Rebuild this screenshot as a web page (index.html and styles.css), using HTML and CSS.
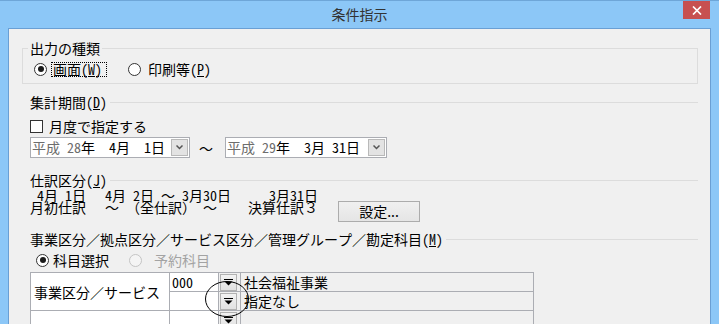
FILE: index.html
```html
<!DOCTYPE html>
<html lang="ja">
<head>
  <meta charset="UTF-8">
  <title>条件指示</title>
  <link rel="stylesheet" href="styles.css">
</head>
<body>
  <div class="window">
    <div class="titlebar">
      <span></span>
      <div class="title">条件指示</div>
      <div class="close">
        <svg width="10" height="9" viewBox="0 0 10 9"><path d="M1 0.5 L9 8.5 M9 0.5 L1 8.5" stroke="#fff" stroke-width="1.7"/></svg>
      </div>
    </div>

    <div class="client">
      <fieldset class="group">
        <legend>出力の種類</legend>
        <div class="radio-row">
          <label class="radio"><span class="dot on"></span><span class="focus">画面(<u>W</u>)</span></label>
          <label class="radio second"><span class="dot"></span><span>印刷等(<u>P</u>)</span></label>
        </div>
      </fieldset>

      <div class="head"><span>集計期間(<u>D</u>)</span></div>
      <div class="check-row">
        <span class="checkbox"></span><span>月度で指定する</span>
      </div>
      <div class="combo-row">
        <div class="combo">
          <span class="combo-text"><span class="era">平成 28</span>年  4月  1日</span>
          <span class="combo-btn"><svg width="7" height="5" viewBox="0 0 7 5"><path d="M0.5 0.5 L3.5 3.5 L6.5 0.5" fill="none" stroke="#555" stroke-width="1.5"/></svg></span>
        </div>
        <span class="tilde">～</span>
        <div class="combo wide">
          <span class="combo-text"><span class="era">平成 29</span>年  3月 31日</span>
          <span class="combo-btn"><svg width="7" height="5" viewBox="0 0 7 5"><path d="M0.5 0.5 L3.5 3.5 L6.5 0.5" fill="none" stroke="#555" stroke-width="1.5"/></svg></span>
        </div>
      </div>

      <div class="head second-head"><span>仕訳区分(<u>J</u>)</span></div>
      <div class="period">
        <span> 4月 1日</span>
        <span>4月 2日 ～ 3月30日</span>
        <span>   3月31日</span>
        <span></span>
        <span>月初仕訳</span>
        <span>～　（全仕訳） ～</span>
        <span>決算仕訳３</span>
        <button class="btn">設定...</button>
      </div>

      <div class="head third-head"><span>事業区分／拠点区分／サービス区分／管理グループ／勘定科目(<u>M</u>)</span></div>
      <div class="radio-row subject">
        <label class="radio"><span class="dot on"></span><span>科目選択</span></label>
        <label class="radio off"><span class="dot"></span><span>予約科目</span></label>
      </div>

      <div class="table-wrap">
        <table class="grid">
          <tr>
            <td class="name" rowspan="2">事業区分／サービス</td>
            <td class="code">000</td>
            <td class="pick"><span class="pick-btn"><svg width="9" height="7" viewBox="0 0 9 7"><path d="M0 0.5 H9" stroke="#000"/><path d="M0.5 2.5 H8.5 L4.5 6.5 Z" fill="#000"/></svg></span></td>
            <td class="value">社会福祉事業</td>
          </tr>
          <tr>
            <td class="code"></td>
            <td class="pick"><span class="pick-btn"><svg width="9" height="7" viewBox="0 0 9 7"><path d="M0 0.5 H9" stroke="#000"/><path d="M0.5 2.5 H8.5 L4.5 6.5 Z" fill="#000"/></svg></span></td>
            <td class="value">指定なし</td>
          </tr>
          <tr>
            <td class="name"></td>
            <td class="code"></td>
            <td class="pick"><span class="pick-btn"><svg width="9" height="7" viewBox="0 0 9 7"><path d="M0 0.5 H9" stroke="#000"/><path d="M0.5 2.5 H8.5 L4.5 6.5 Z" fill="#000"/></svg></span></td>
            <td class="value"></td>
          </tr>
        </table>
        <svg class="mark" width="46" height="40" viewBox="0 0 46 40"><ellipse cx="23" cy="19" rx="21.5" ry="17.5" fill="none" stroke="#000" stroke-width="1"/></svg>
      </div>
    </div>
  </div>
</body>
</html>
```

FILE: styles.css
```css
body {
  margin: 0;
  padding: 0;
  font-family: "Noto Sans Mono CJK JP", "Noto Sans CJK JP", monospace;
  font-size: 14px;
  color: #000;
  background-color: #8cc7f7;
}

u {
  text-decoration: underline;
  text-underline-offset: 1px;
}

.window {
  display: flex;
  flex-direction: column;
  height: 324px;
  overflow: hidden;
  border-top: 1px solid #6ea6d8;
  box-sizing: border-box;
}

.titlebar {
  display: grid;
  grid-template-columns: 1fr auto 1fr;
  height: 27px;
  flex-shrink: 0;
}

.title {
  font-family: "Noto Sans CJK JP", sans-serif;
  font-size: 14px;
  color: #333;
  line-height: 27px;
}

.close {
  justify-self: end;
  width: 27px;
  height: 18px;
  margin-right: 9px;
  background-color: #c75050;
  display: flex;
  align-items: center;
  justify-content: center;
}

.client {
  flex: 1;
  margin: 0 8px 0 8px;
  border: 1px solid #6a9fd4;
  border-bottom: none;
  background-color: #f0f0f0;
  padding: 0 12px 0 13px;
}

/* 出力の種類 */
.group {
  margin: 11px 0 0 0;
  border: 1px solid #dcdcdc;
  padding: 5px 0 6px 5px;
}

.group legend {
  padding: 0 2px;
  line-height: 16px;
}

.radio-row {
  display: flex;
  align-items: center;
  height: 16px;
  line-height: 13px;
  margin-left: 6px;
}

.radio {
  display: flex;
  align-items: center;
  gap: 4px;
}

.radio.second {
  margin-left: 21px;
  gap: 7px;
}

.dot {
  width: 11px;
  height: 11px;
  border: 1px solid #333;
  border-radius: 50%;
  background-color: #fff;
  display: flex;
  align-items: center;
  justify-content: center;
}

.dot.on::after {
  content: "";
  width: 6px;
  height: 6px;
  border-radius: 50%;
  background-color: #1a1a1a;
}

.focus {
  border: 1px dotted #000;
  padding: 0 4px 0 1px;
}

/* 見出し行 */
.head {
  display: flex;
  align-items: center;
  gap: 3px;
  height: 16px;
  line-height: 16px;
  padding-left: 8px;
  margin-top: 10px;
}

.head::after {
  content: "";
  flex: 1;
  border-top: 1px solid #dcdcdc;
}

.second-head {
  margin-top: 14px;
}

.third-head {
  margin-top: 9px;
}

.check-row {
  display: flex;
  align-items: center;
  gap: 6px;
  height: 16px;
  margin-top: 8px;
  padding-left: 8px;
}

.checkbox {
  width: 11px;
  height: 11px;
  border: 1px solid #333;
  background-color: #fff;
}

.combo-row {
  display: flex;
  align-items: center;
  margin-top: 3px;
  padding-left: 8px;
}

.combo {
  display: flex;
  width: 160px;
  height: 21px;
  box-sizing: border-box;
  border: 1px solid #abadb3;
  background-color: #fff;
}

.combo.wide {
  width: 162px;
}

.combo-text {
  flex: 1;
  white-space: pre;
  line-height: 19px;
  padding-left: 1px;
}

.era {
  color: #6d6d6d;
}

.combo-btn {
  width: 15px;
  margin: 1px;
  border: 1px solid #b9b9b9;
  background-color: #e3e3e3;
  display: flex;
  align-items: center;
  justify-content: center;
}

.tilde {
  margin: 0 12px 0 9px;
}

/* 仕訳区分 */
.period {
  display: grid;
  grid-template-columns: 75px 143px 90px 82px;
  grid-template-rows: 12px auto;
  align-items: start;
  line-height: 12px;
  white-space: pre;
  margin-top: 1px;
  padding-left: 8px;
}

.btn {
  width: 82px;
  height: 21px;
  border: 1px solid #acacac;
  background: linear-gradient(#f0f0f0, #e5e5e5);
  font-family: "Noto Sans CJK JP", sans-serif;
  font-size: 14px;
  line-height: 17px;
  padding: 0;
  color: #000;
}

.subject {
  margin-top: 5px;
  margin-left: 14px;
  height: 16px;
}

.radio.off {
  margin-left: 20px;
  gap: 12px;
  color: #a3a3a3;
}

.radio.off .dot {
  border-color: #c4c4c4;
  background-color: #f4f4f4;
}

/* 科目テーブル */
.table-wrap {
  position: relative;
  margin-top: 4px;
  margin-left: 8px;
}

.grid {
  border-collapse: collapse;
  table-layout: fixed;
  width: 504px;
}

.grid td {
  border: 1px solid #abadb3;
  height: 18px;
  padding: 0;
  line-height: 14px;
  white-space: nowrap;
  overflow: hidden;
}

.grid .name {
  width: 135px;
  background-color: #fff;
  padding-left: 3px;
}

.grid .code {
  width: 46px;
  background-color: #fff;
  padding-left: 2px;
  vertical-align: top;
  padding-top: 2px;
  height: 16px;
}

.grid .pick {
  width: 21px;
  background-color: #f0f0f0;
  border-right: 1px solid #abadb3;
}

.pick-btn {
  display: flex;
  align-items: center;
  justify-content: center;
  width: 17px;
  height: 17px;
  margin-left: 1px;
  box-sizing: border-box;
  border: 1px solid #b2b2b2;
  background: linear-gradient(#f2f2f2, #e2e2e2);
}

.grid .value {
  background-color: #f0f0f0;
  padding-left: 3px;
}

.mark {
  position: absolute;
  left: 174px;
  top: 8px;
}
```
